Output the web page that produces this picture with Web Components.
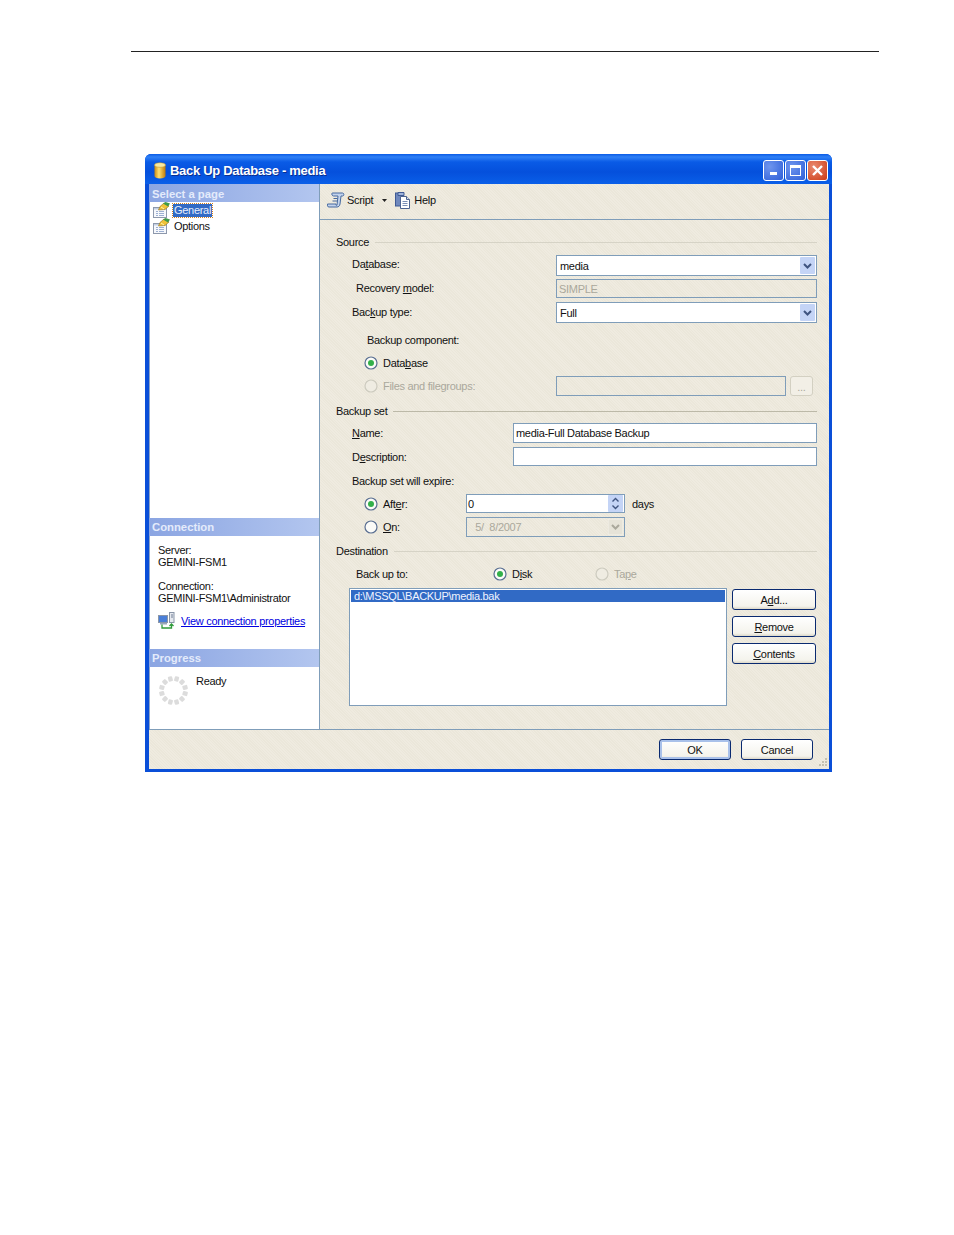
<!DOCTYPE html>
<html>
<head>
<meta charset="utf-8">
<title>Back Up Database - media</title>
<style>
  body { margin: 0; background: #fff; font: 11px "Liberation Sans", sans-serif; letter-spacing: -.3px; color: #111; }
</style>
</head>
<body>
<manual-page>
  <backup-dialog></backup-dialog>
</manual-page>

<script>
const ICONS = {
  db: `<svg width="14" height="17" viewBox="0 0 14 17"><defs><linearGradient id="c" x2="1" y2="0"><stop offset="0" stop-color="#c98a10"/><stop offset=".4" stop-color="#ffe070"/><stop offset="1" stop-color="#c07a08"/></linearGradient></defs><path d="M1.500 3v11c0 1.400 2.400 2.500 5.500 2.500s5.500-1.100 5.500-2.500V3z" fill="url(#c)"/><ellipse cx="7" cy="3" rx="5.500" ry="2.300" fill="#f8e9a0" stroke="#b98a20" stroke-width=".5"/></svg>`,
  page: `<svg width="17" height="16" viewBox="0 0 17 16"><rect x=".5" y="5.500" width="13" height="10" fill="#f6f8fc" stroke="#8d98ac"/><rect x="1" y="6" width="12" height="1.500" fill="#c3cfe2"/><path d="M3 9.500h2M6 9.500h5M3 11.500h2M6 11.500h5M3 13.500h2M6 13.500h5" stroke="#9db0d2"/><path d="M5.500 8l1.500-3.500 4-3.500 5 3-4 3.500z" fill="#f0c238" stroke="#8f7020" stroke-width=".6"/><path d="M10 1.500l2.500-1.500 4.500 1.500-2 3z" fill="#3f9a48"/><path d="M8 5l3 2" stroke="#fff2b0"/></svg>`,
  script: `<svg width="18" height="16" viewBox="0 0 18 16"><path d="M5.500 1h10c1.800 0 1.800 3 0 3H14l-1 8c-.3 2-1.500 3-3 3H2C.5 15 0 13.500 .5 12H9v1c0 .6 1 .6 1 0l1-9H6.500C4.800 4 4.200 1 5.500 1z" fill="#c3d3ec" stroke="#46699f"/><path d="M6.500 6.500h4M5.500 9h4.500" stroke="#46699f"/></svg>`,
  help: `<svg width="16" height="17" viewBox="0 0 16 17"><rect x=".5" y="1" width="8" height="13" fill="#6f88bd" stroke="#3f5a94"/><path d="M3 .5h6v3H3z" fill="#9fb3da" stroke="#3f5a94"/><path d="M5.500 4.500h6l3 3v9h-9z" fill="#fff" stroke="#4d638f"/><path d="M11.500 4.500v3h3" fill="#d8e0ee" stroke="#4d638f"/><path d="M7.500 9.500h5M7.500 11.500h5M7.500 13.500h5" stroke="#7b8fb5"/></svg>`,
  conn: `<svg width="17" height="17" viewBox="0 0 17 17"><rect x=".5" y="3.500" width="9" height="7" fill="#4a7fd8" stroke="#8a96a8"/><rect x="2" y="11" width="7" height="1.500" fill="#9aa7bb"/><rect x="11.500" y=".5" width="4.500" height="10" fill="#e6e9ef" stroke="#8a96a8"/><path d="M13 3h2M13 5h2" stroke="#6f7d94"/><path d="M4 12.500v3.500h9.500v-3.500M11.500 14l2-2 2 2" fill="none" stroke="#2f9a3a" stroke-width="1.300"/></svg>`,
  spinner: (() => {
    let dots = "";
    for (let i = 0; i < 12; i++) {
      const a = i * 30 + 15;
      dots += `<rect x="12.300" y="0" width="4.400" height="5" rx="1" fill="#dcdcdc" transform="rotate(${a} 14.500 14.500)"/>`;
    }
    return `<svg width="29" height="29" viewBox="0 0 29 29">${dots}</svg>`;
  })()
};

// top rule + content column of the manual page
class ManualPage extends HTMLElement {
  constructor() {
    super();
    this.attachShadow({ mode: "open" }).innerHTML = `
      <style>
        :host { display: block; padding: 51px 75px 0 131px; height: 1184px; }
        #rule { height: 1px; background: #222; }
        #content { margin: 102px 0 0 14px; }
      </style>
      <div id="rule"></div>
      <div id="content"><slot></slot></div>`;
  }
}

class PaneHeader extends HTMLElement {
  constructor() {
    super();
    this.attachShadow({ mode: "open" }).innerHTML = `
      <style>
        :host { display: block; height: 18px; padding-left: 3px; letter-spacing: 0;
          background: linear-gradient(90deg, #8ba5e2, #b3c6ef);
          color: #e4ebfb; font: bold 11.300px/18px "Liberation Sans", sans-serif; }
      </style><slot></slot>`;
  }
}

class WinButton extends HTMLElement {
  constructor() {
    super();
    this.attachShadow({ mode: "open" }).innerHTML = `
      <style>
        :host { display: flex; align-items: center; justify-content: center; box-sizing: border-box;
          width: 84px; height: 21px; border: 1px solid #0a2a70; border-radius: 3px;
          background: linear-gradient(#ffffff, #f4f3ec 85%, #dcd8c8); color: #111; }
        :host([primary]) { box-shadow: inset 0 0 0 2px #a9c1ea; }
      </style><slot></slot>`;
  }
}

class RadioOption extends HTMLElement {
  constructor() {
    super();
    const on = this.hasAttribute("checked");
    const off = this.hasAttribute("disabled");
    const ring = off ? "#cdcbbf" : "#5a6f92";
    const fill = off ? "#efece2" : "#fbfbf8";
    this.attachShadow({ mode: "open" }).innerHTML = `
      <style>
        :host { display: inline-flex; align-items: center; gap: 5px; height: 14px; }
        :host([disabled]) { color: #aaa89c; }
        svg { display: block; }
      </style>
      <svg width="14" height="14" viewBox="0 0 14 14">
        <circle cx="7" cy="7" r="6" fill="${fill}" stroke="${ring}" stroke-width="1.200"/>
        ${on ? '<circle cx="7" cy="7" r="3" fill="#33b04a"/>' : ""}
      </svg><span><slot></slot></span>`;
  }
}

class FieldBox extends HTMLElement {
  constructor() {
    super();
    const kind = this.getAttribute("kind") || "text";
    let extra = "";
    if (kind === "combo") {
      extra = `<svg class="btn" width="15" height="17" viewBox="0 0 15 17"><rect width="15" height="17" rx="1" fill="#c4d4f6"/><path d="M4 7l3.500 3.500L11 7" fill="none" stroke="#3f5480" stroke-width="2"/></svg>`;
    } else if (kind === "combo-off") {
      extra = `<svg class="btn" width="15" height="16" viewBox="0 0 15 16"><rect width="15" height="16" fill="#e6e3d8" stroke="#f4f2ea"/><path d="M4 6l3.500 3.500L11 6" fill="none" stroke="#aaa89c" stroke-width="2"/></svg>`;
    } else if (kind === "spin") {
      extra = `<svg class="btn" width="15" height="17" viewBox="0 0 15 17"><rect width="15" height="17" rx="1" fill="#c4d4f6"/><path d="M4.500 6.500l3-3 3 3M4.500 10.500l3 3 3-3" fill="none" stroke="#3f5480" stroke-width="1.400"/></svg>`;
    }
    this.attachShadow({ mode: "open" }).innerHTML = `
      <style>
        :host { display: flex; align-items: center; box-sizing: border-box; flex: 1;
          border: 1px solid #7f9db9; background: #fff; padding-left: 2px; min-width: 0; }
        :host([disabled]) { background: transparent; color: #aaa89c; }
        :host([kind="combo"]) { padding-left: 3px; }
        :host([kind="spin"]) { padding-left: 1px; }
        #v { flex: 1; white-space: pre; }
        .btn { display: block; margin-right: 1px; }
      </style>
      <span id="v"><slot></slot></span>${extra}`;
  }
}

class LegendLine extends HTMLElement {
  constructor() {
    super();
    this.attachShadow({ mode: "open" }).innerHTML = `
      <style>
        :host { display: flex; align-items: center; gap: 6px; height: 14px; }
        i { flex: 1; height: 1px; background: var(--line, #d6d3c6); }
      </style><span><slot></slot></span><i></i>`;
  }
}

class BackupSidebar extends HTMLElement {
  constructor() {
    super();
    this.attachShadow({ mode: "open" }).innerHTML = `
      <style>
        :host { display: flex; flex-direction: column; width: 170px; background: #fff; flex: none;
          box-sizing: border-box; border-left: 1px solid #8ea4c8; }
        pane-header { margin-left: -1px; }
        #pages { height: 316px; }
        .pg { display: flex; align-items: center; height: 16px; padding-left: 3px; gap: 3px; }
        .pg svg { flex: none; display: block; margin-top: -1px; }
        .pg span { padding: 0 1px; line-height: 13px; }
        .sel span { background: #316ac5; color: #e8eefc; outline: 1px dotted #d08020; }
        #conn { height: 113px; padding: 8px 0 0 8px; box-sizing: border-box; line-height: 12px; }
        #conn p { margin: 0 0 12px; }
        #link { display: flex; align-items: center; gap: 6px; margin-top: -4px; }
        #link a { color: #0000e0; text-decoration: underline; }
        #link svg { display: block; }
        #prog { flex: 1; display: flex; padding: 9px 0 0 9px; gap: 8px; }
        #prog svg { display: block; }
        #prog span { margin-top: -1px; }
      </style>
      <pane-header style="line-height:20px">Select a page</pane-header>
      <div id="pages">
        <div class="pg sel">${ICONS.page}<span>General</span></div>
        <div class="pg">${ICONS.page}<span>Options</span></div>
      </div>
      <pane-header>Connection</pane-header>
      <div id="conn">
        <p>Server:<br>GEMINI-FSM1</p>
        <p>Connection:<br>GEMINI-FSM1\\Administrator</p>
        <div id="link">${ICONS.conn}<a>View connection properties</a></div>
      </div>
      <pane-header>Progress</pane-header>
      <div id="prog">${ICONS.spinner}<span>Ready</span></div>`;
  }
}

class BackupForm extends HTMLElement {
  constructor() {
    super();
    this.attachShadow({ mode: "open" }).innerHTML = `
      <style>
        :host { display: flex; flex-direction: column; flex: 1; padding: 15px 12px 0 16px; }
        .r { display: flex; align-items: center; flex: none; }
        .lab { flex: none; white-space: nowrap; box-sizing: border-box; }
        .h14 { height: 14px; }
        u { text-underline-offset: 1px; }
        #dest { display: flex; margin: 7px 1px 0 13px; gap: 5px; }
        #list { box-sizing: border-box; width: 378px; height: 118px; border: 1px solid #7f9db9; background: #fff; padding: 1px; }
        #list div { background: #316ac5; color: #f0f4ff; height: 12px; line-height: 12px; padding-left: 3px; }
        #side { display: flex; flex-direction: column; gap: 6px; padding-top: 1px; }
        #ellipsis { box-sizing: border-box; width: 23px; height: 20px; margin: 0 4px; flex: none; border: 1px solid #d3d0c2; border-radius: 3px;
          color: #aaa89c; text-align: center; line-height: 20px; background: #f2efe6; }
      </style>
      <legend-line>Source</legend-line>
      <div class="r" style="height:21px;margin-top:6px"><span class="lab" style="width:220px;padding-left:16px;margin-top:-3px">Da<u>t</u>abase:</span><field-box kind="combo" style="height:21px">media</field-box></div>
      <div class="r" style="height:19px;margin-top:3px"><span class="lab" style="width:220px;padding-left:20px;margin-top:-1px">Recovery <u>m</u>odel:</span><field-box disabled style="height:19px">SIMPLE</field-box></div>
      <div class="r" style="height:21px;margin-top:4px"><span class="lab" style="width:220px;padding-left:16px;margin-top:-1px">Bac<u>k</u>up type:</span><field-box kind="combo" style="height:21px">Full</field-box></div>
      <div class="r h14" style="margin-top:10px;padding-left:31px">Backup component:</div>
      <div class="r h14" style="margin-top:9px;padding-left:28px"><radio-option checked>Data<u>b</u>ase</radio-option></div>
      <div class="r" style="height:20px;margin-top:6px;padding-left:28px">
        <radio-option disabled style="width:192px">Files and filegroups:</radio-option>
        <field-box disabled style="height:20px"></field-box><span id="ellipsis">...</span>
      </div>
      <legend-line style="margin-top:8px;--line:#bcb9a8">Backup set</legend-line>
      <div class="r" style="height:20px;margin-top:5px"><span class="lab" style="width:177px;padding-left:16px"><u>N</u>ame:</span><field-box style="height:20px">media-Full Database Backup</field-box></div>
      <div class="r" style="height:19px;margin-top:4px"><span class="lab" style="width:177px;padding-left:16px">D<u>e</u>scription:</span><field-box style="height:19px"></field-box></div>
      <div class="r h14" style="margin-top:8px;padding-left:16px">Backup set will expire:</div>
      <div class="r" style="height:19px;margin-top:6px;padding-left:28px">
        <radio-option checked style="width:102px">Aft<u>e</u>r:</radio-option>
        <field-box kind="spin" style="height:19px;flex:none;width:159px">0</field-box><span style="margin-left:7px">days</span>
      </div>
      <div class="r" style="height:20px;margin-top:4px;padding-left:28px">
        <radio-option style="width:102px"><u>O</u>n:</radio-option>
        <field-box kind="combo-off" disabled style="height:20px;flex:none;width:159px;padding-left:0">   5/  8/2007</field-box>
      </div>
      <legend-line style="margin-top:7px">Destination</legend-line>
      <div class="r h14" style="margin-top:9px;padding-left:20px">
        <span class="lab" style="width:137px">Back up to:</span>
        <radio-option checked style="width:102px">D<u>i</u>sk</radio-option>
        <radio-option disabled>Ta<u>p</u>e</radio-option>
      </div>
      <div id="dest">
        <div id="list"><div>d:\\MSSQL\\BACKUP\\media.bak</div></div>
        <div id="side">
          <win-button>A<u>d</u>d...</win-button>
          <win-button><u>R</u>emove</win-button>
          <win-button><u>C</u>ontents</win-button>
        </div>
      </div>`;
  }
}

class BackupDialog extends HTMLElement {
  constructor() {
    super();
    this.attachShadow({ mode: "open" }).innerHTML = `
      <style>
        :host { display: flex; flex-direction: column; box-sizing: border-box; width: 687px; height: 618px;
          background: #0a55e3; border-radius: 6px 6px 0 0; border: solid #0a4fd8; border-width: 0 3px 3px 4px;
          box-shadow: inset 0 -1px #0838a0;
          --face: repeating-linear-gradient(45deg, #efebe0 0 1px, #ebe7da 1px 2px); }
        #title { height: 30px; box-sizing: border-box; margin: 0 -3px 0 -4px; padding: 3px 4px 0 8px; flex: none; display: flex; align-items: center;
          background: linear-gradient(#0a5be6 0, #2f80f6 3px, #0a5be6 8px, #0550dc 60%, #0a5fe8 100%); border-radius: 6px 6px 0 0;
          color: #fff; font: bold 13px "Liberation Sans", sans-serif; letter-spacing: -.3px; text-shadow: 1px 1px #0a2f90; }
        #title svg { display: block; }
        #title span { flex: 1; margin-left: 3px; }
        .cap { width: 21px; height: 21px; box-sizing: border-box; border: 1px solid #fff; border-radius: 3px;
          background: radial-gradient(circle at 30% 30%, #6f95ee, #2f5fd8); display: flex; align-items: center; justify-content: center; margin-left: 1px; }
        .cap.x { background: radial-gradient(circle at 30% 30%, #e98a70, #cc3a14); }
        #mid { flex: 1; display: flex; background: var(--face); min-height: 0; }
        #main { flex: 1; display: flex; flex-direction: column; border-left: 1px solid #7f9db9; }
        #tools { height: 36px; box-sizing: border-box; flex: none; border-bottom: 1px solid #7f9db9; display: flex; align-items: center; padding: 0 0 3px 7px; }
        #tools svg { display: block; }
        #tools span { margin-left: 3px; }
        #foot { height: 40px; flex: none; box-sizing: border-box; border-top: 1px solid #7f9db9; background: var(--face); display: flex; align-items: flex-start; justify-content: flex-end; gap: 10px; padding: 9px 16px 0 0; position: relative; }
        #foot win-button { width: 72px; }
        #grip { position: absolute; right: 1px; bottom: 1px; }
      </style>
      <div id="title">${ICONS.db}<span>Back Up Database - media</span>
        <div class="cap"><svg width="9" height="9"><rect x="1" y="6" width="7" height="3" fill="#fff"/></svg></div>
        <div class="cap"><svg width="13" height="13"><rect x="1.500" y="1.500" width="10" height="10" fill="none" stroke="#fff"/><rect x="1" y="1" width="11" height="3" fill="#fff"/></svg></div>
        <div class="cap x"><svg width="13" height="13"><path d="M2 2l9 9M11 2l-9 9" stroke="#fff" stroke-width="2.400"/></svg></div>
      </div>
      <div id="mid">
        <backup-sidebar></backup-sidebar>
        <div id="main">
          <div id="tools">${ICONS.script}<span style="margin-left:2px">Script</span>
            <svg width="5" height="3" style="margin:0 8px 0 9px"><path d="M0 0h5L2.500 3z" fill="#222"/></svg>
            ${ICONS.help}<span>Help</span></div>
          <backup-form></backup-form>
        </div>
      </div>
      <div id="foot">
        <win-button primary>OK</win-button>
        <win-button>Cancel</win-button>
        <svg id="grip" width="11" height="11"><path d="M8 1h2v2H8zM5 4h2v2H5zM8 4h2v2H8zM2 7h2v2H2zM5 7h2v2H5zM8 7h2v2H8z" fill="#c4c1b2"/></svg>
      </div>`;
  }
}

customElements.define("manual-page", ManualPage);
customElements.define("pane-header", PaneHeader);
customElements.define("win-button", WinButton);
customElements.define("radio-option", RadioOption);
customElements.define("field-box", FieldBox);
customElements.define("legend-line", LegendLine);
customElements.define("backup-sidebar", BackupSidebar);
customElements.define("backup-form", BackupForm);
customElements.define("backup-dialog", BackupDialog);
</script>
</body>
</html>
